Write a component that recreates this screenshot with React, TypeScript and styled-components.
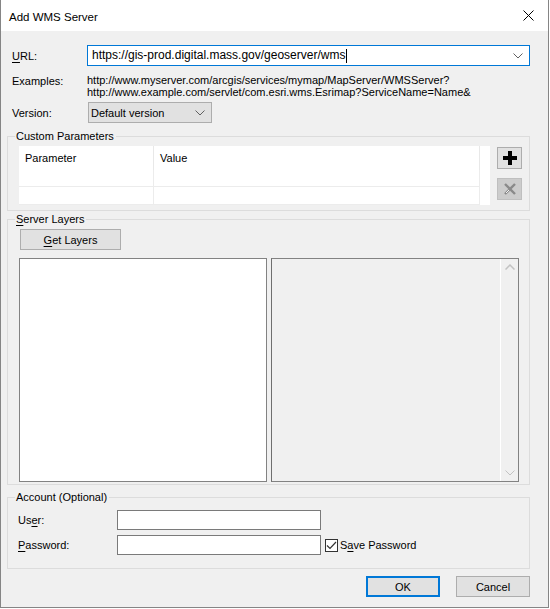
import styled, { createGlobalStyle } from "styled-components"

const GlobalStyle = createGlobalStyle`
    html, body {
        margin: 0;
        padding: 0;
        background: #ffffff;
    }
    body {
        font-family: "Liberation Sans", Arial, sans-serif;
        font-size: 11px;
        color: #000;
    }
`

const Window = styled.div`
    width: 549px;
    height: 608px;
    box-sizing: border-box;
    border: 1px solid #858585;
    border-top: none;
    display: flex;
    flex-direction: column;
    background: #f0f0f0;
`

const TitleBar = styled.div`
    height: 31px;
    flex: none;
    background: #ffffff;
    display: flex;
    align-items: center;
    justify-content: space-between;
    padding: 0 14px 0 8px;
`

const Title = styled.span`
    font-size: 11.5px;
    padding-top: 3px;
`

const Content = styled.div`
    flex: 1;
    display: flex;
    flex-direction: column;
    padding: 0 18px 0 6px;
`

const FormRow = styled.div<{ $top: number }>`
    display: flex;
    align-items: center;
    margin-top: ${p => p.$top}px;
    padding-left: 5px;
`

const Label = styled.div<{ $width: number }>`
    width: ${p => p.$width}px;
    flex: none;
`

const Combo = styled.div<{ $width: number, $focused?: boolean }>`
    width: ${p => p.$width}px;
    height: 21px;
    box-sizing: border-box;
    display: flex;
    align-items: center;
    justify-content: space-between;
    padding: 0 6px 0 ${p => p.$focused ? 4 : 2}px;
    border: 1px solid ${p => p.$focused ? "#0078d7" : "#adadad"};
    background: ${p => p.$focused ? "#ffffff" : "#e1e1e1"};
    font-size: ${p => p.$focused ? 12 : 11}px;
`

const Caret = styled.span`
    display: inline-block;
    width: 1px;
    height: 14px;
    background: #000;
    vertical-align: middle;
    margin-left: 1px;
`

const Examples = styled.div`
    display: flex;
    flex-direction: column;
    line-height: 11.5px;
`

const Group = styled.fieldset<{ $top: number, $height: number }>`
    margin: ${p => p.$top}px 0 0 0;
    height: ${p => p.$height}px;
    box-sizing: border-box;
    border: 1px solid #dcdcdc;
    padding: 0;
    min-width: 0;
`

const Legend = styled.legend`
    margin-left: 7px;
    padding: 0 2px 0 1px;
    line-height: 14px;
`

const ParamsBody = styled.div`
    display: flex;
    gap: 7px;
    padding: 3px 0 0 11px;
`

const Grid = styled.div`
    width: 471px;
    height: 59px;
    background: #ffffff;
    display: grid;
    grid-template-columns: 135px 326px 10px;
    grid-template-rows: 24px 17px 18px;
`

const HeadCell = styled.div<{ $last?: boolean }>`
    display: flex;
    align-items: center;
    padding-left: 6px;
    border-right: 1px solid ${p => p.$last ? "#f0f0f0" : "#e8e8e8"};
`

const Cell = styled.div<{ $last?: boolean }>`
    border-bottom: 1px solid #ececec;
    border-right: 1px solid #ececec;
    ${p => p.$last && "border-right: none; border-bottom: none;"}
`

const SideButtons = styled.div`
    display: flex;
    flex-direction: column;
    gap: 9px;
    padding-top: 1px;
`

const IconButton = styled.div<{ $disabled?: boolean }>`
    width: 25px;
    height: 22px;
    box-sizing: border-box;
    display: flex;
    align-items: center;
    justify-content: center;
    border: 1px solid ${p => p.$disabled ? "#bfbfbf" : "#adadad"};
    background: ${p => p.$disabled ? "#cccccc" : "#e1e1e1"};
`

const LayersBody = styled.div`
    display: flex;
    flex-direction: column;
    padding: 3px 0 0 11px;
`

const Button = styled.div<{ $width: number, $default?: boolean }>`
    width: ${p => p.$width}px;
    height: 21px;
    box-sizing: border-box;
    display: flex;
    align-items: center;
    justify-content: center;
    background: #e1e1e1;
    border: ${p => p.$default ? "2px solid #0078d7" : "1px solid #adadad"};
`

const Lists = styled.div`
    display: flex;
    gap: 4px;
    margin-top: 8px;
`

const ListBox = styled.div`
    width: 248px;
    height: 224px;
    box-sizing: border-box;
    border: 1px solid #828282;
    background: #ffffff;
`

const DisabledList = styled.div`
    width: 248px;
    height: 224px;
    box-sizing: border-box;
    border: 1px solid #828282;
    border-left-color: #6f6f6f;
    background: #f0f0f0;
    display: flex;
    justify-content: flex-end;
`

const ScrollBar = styled.div`
    width: 17px;
    border-left: 1px solid #ffffff;
    display: flex;
    flex-direction: column;
    justify-content: space-between;
    align-items: center;
    padding: 5px 0;
`

const AccountBody = styled.div`
    display: flex;
    flex-direction: column;
    gap: 5px;
    padding: 6px 0 0 10px;
`

const AccountRow = styled.div`
    display: flex;
    align-items: center;
`

const TextBox = styled.div`
    width: 204px;
    height: 20px;
    box-sizing: border-box;
    border: 1px solid #7a7a7a;
    background: #ffffff;
`

const CheckRow = styled.label`
    display: flex;
    align-items: center;
    margin-left: 4px;
    gap: 2px;
`

const CheckBox = styled.span`
    width: 13px;
    height: 13px;
    box-sizing: border-box;
    border: 1px solid #333333;
    background: #ffffff;
    display: flex;
    align-items: center;
    justify-content: center;
`

const Footer = styled.div`
    display: flex;
    justify-content: flex-end;
    gap: 16px;
    margin-top: 7px;
`

const Key = styled.u`
    text-decoration-thickness: 1px;
    text-underline-offset: 2px;
`

function Chevron({ color = "#606060" }: { color?: string }) {
    return (
        <svg width="10" height="6" viewBox="0 0 10 6">
            <path d="M0.5 0.5 L5 5 L9.5 0.5" fill="none" stroke={color} strokeWidth="1" />
        </svg>
    )
}

export default function App() {
    return (
        <>
            <GlobalStyle />
            <Window>
                <TitleBar>
                    <Title>Add WMS Server</Title>
                    <svg width="11" height="11" viewBox="0 0 11 11">
                        <path d="M0.5 0.5 L10.5 10.5 M10.5 0.5 L0.5 10.5" stroke="#000" strokeWidth="1" />
                    </svg>
                </TitleBar>
                <Content>
                    <FormRow $top={14}>
                        <Label $width={75}><Key>U</Key>RL:</Label>
                        <Combo $width={444} $focused>
                            <span>https://gis-prod.digital.mass.gov/geoserver/wms<Caret /></span>
                            <Chevron />
                        </Combo>
                    </FormRow>
                    <FormRow $top={9} style={{ alignItems: "flex-start" }}>
                        <Label $width={75}>Examples:</Label>
                        <Examples>
                            <span>http://www.myserver.com/arcgis/services/mymap/MapServer/WMSServer?</span>
                            <span>http://www.example.com/servlet/com.esri.wms.Esrimap?ServiceName=Name&amp;</span>
                        </Examples>
                    </FormRow>
                    <FormRow $top={4}>
                        <Label $width={76}>Version:</Label>
                        <Combo $width={124}>
                            <span>Default version</span>
                            <Chevron />
                        </Combo>
                    </FormRow>

                    <Group $top={6} $height={82}>
                        <Legend>Custom Parameters</Legend>
                        <ParamsBody>
                            <Grid>
                                <HeadCell>Parameter</HeadCell>
                                <HeadCell>Value</HeadCell>
                                <Cell $last />
                                <Cell />
                                <Cell />
                                <Cell $last />
                                <Cell />
                                <Cell />
                                <Cell $last />
                            </Grid>
                            <SideButtons>
                                <IconButton>
                                    <svg width="14" height="14" viewBox="0 0 14 14">
                                        <path d="M5 0 H9 V5 H14 V9 H9 V14 H5 V9 H0 V5 H5 Z" fill="#000" />
                                    </svg>
                                </IconButton>
                                <IconButton $disabled>
                                    <svg width="12" height="12" viewBox="0 0 12 12">
                                        <path d="M1 1 L11 11 M11 1 L1 11" stroke="#8a8a8a" strokeWidth="2.4" />
                                        <path d="M2 10 L5 7" stroke="#f4f4f4" strokeWidth="1" />
                                    </svg>
                                </IconButton>
                            </SideButtons>
                        </ParamsBody>
                    </Group>

                    <Group $top={1} $height={273}>
                        <Legend><Key>S</Key>erver Layers</Legend>
                        <LayersBody>
                            <Button $width={101} style={{ marginLeft: 1 }}><span><Key>G</Key>et Layers</span></Button>
                            <Lists>
                                <ListBox />
                                <DisabledList>
                                    <ScrollBar>
                                        <svg width="10" height="6" viewBox="0 0 10 6">
                                            <path d="M0.5 5.5 L5 1 L9.5 5.5" fill="none" stroke="#c2c2c2" strokeWidth="1.5" />
                                        </svg>
                                        <Chevron color="#c2c2c2" />
                                    </ScrollBar>
                                </DisabledList>
                            </Lists>
                        </LayersBody>
                    </Group>

                    <Group $top={5} $height={79}>
                        <Legend>Account (Optional)</Legend>
                        <AccountBody>
                            <AccountRow>
                                <Label $width={99}>Us<Key>e</Key>r:</Label>
                                <TextBox />
                            </AccountRow>
                            <AccountRow>
                                <Label $width={99}><Key>P</Key>assword:</Label>
                                <TextBox />
                                <CheckRow>
                                    <CheckBox>
                                        <svg width="11" height="9" viewBox="0 0 11 9">
                                            <path d="M1 4.5 L4 7.5 L10 1" fill="none" stroke="#333" strokeWidth="1.2" />
                                        </svg>
                                    </CheckBox>
                                    <span>S<Key>a</Key>ve Password</span>
                                </CheckRow>
                            </AccountRow>
                        </AccountBody>
                    </Group>

                    <Footer>
                        <Button $width={74} $default>OK</Button>
                        <Button $width={74}>Cancel</Button>
                    </Footer>
                </Content>
            </Window>
        </>
    )
}
